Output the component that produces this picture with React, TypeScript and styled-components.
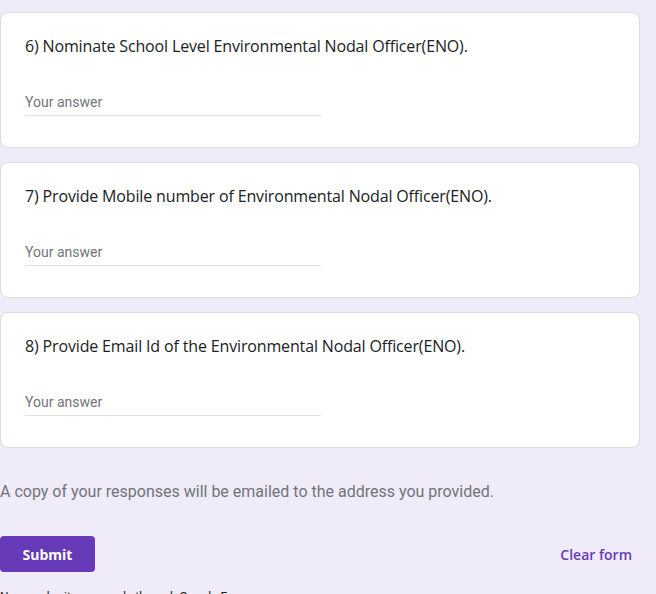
import React from "react";
import styled, { createGlobalStyle } from "styled-components";

const Global = createGlobalStyle`
  html, body { margin: 0; padding: 0; }
  body {
    background: #efebf8;
    font-family: Roboto, "Liberation Sans", sans-serif;
    width: 656px;
    height: 594px;
    overflow: hidden;
  }
`;

const Page = styled.div`
  width: 640px;
  padding-top: 12px;
  display: flex;
  flex-direction: column;
  gap: 14px;
`;

const Card = styled.section`
  background: #ffffff;
  border: 1px solid #dadce0;
  border-radius: 8px;
  padding: 21px 24px 31px;
  display: flex;
  flex-direction: column;
`;

const Title = styled.div`
  font-family: "Open Sans", sans-serif;
  font-size: 16px;
  letter-spacing: -0.15px;
  line-height: 24px;
  color: #202124;
`;

const Answer = styled.div`
  margin-top: 30px;
  width: 296px;
  height: 27px;
  border-bottom: 1px solid #e0e0e0;
  font-family: Roboto, sans-serif;
  font-size: 14px;
  line-height: 28px;
  color: #70757a;
`;

const Note = styled.div`
  margin-top: 34px;
  font-family: Roboto, sans-serif;
  font-size: 16px;
  line-height: 20px;
  color: #70757a;
`;

const Actions = styled.div`
  margin-top: 34px;
  width: 640px;
  display: flex;
  justify-content: space-between;
  align-items: center;
`;

const SubmitButton = styled.button`
  width: 95px;
  height: 36px;
  border: none;
  border-radius: 4px;
  background: #673ab7;
  color: #ffffff;
  font-family: "Open Sans", sans-serif;
  font-weight: 700;
  font-size: 14px;
  padding: 0;
`;

const ClearButton = styled.button`
  background: none;
  border: none;
  padding: 0 8px;
  height: 36px;
  color: #673ab7;
  font-family: "Open Sans", sans-serif;
  font-weight: 600;
  font-size: 14px;
`;

const Warning = styled.div`
  margin-top: 17px;
  font-family: Roboto, sans-serif;
  font-size: 12px;
  line-height: 16px;
  color: #202124;
`;

const questions = [
  "6) Nominate School Level Environmental Nodal Officer(ENO).",
  "7) Provide Mobile number of Environmental Nodal Officer(ENO).",
  "8) Provide Email Id of the Environmental Nodal Officer(ENO).",
];

export default function App() {
  return (
    <>
      <Global />
      <Page>
        {questions.map((q) => (
          <Card key={q}>
            <Title>{q}</Title>
            <Answer>Your answer</Answer>
          </Card>
        ))}
      </Page>
      <Note>A copy of your responses will be emailed to the address you provided.</Note>
      <Actions>
        <SubmitButton>Submit</SubmitButton>
        <ClearButton>Clear form</ClearButton>
      </Actions>
      <Warning>Never submit passwords through Google Forms.</Warning>
    </>
  );
}
